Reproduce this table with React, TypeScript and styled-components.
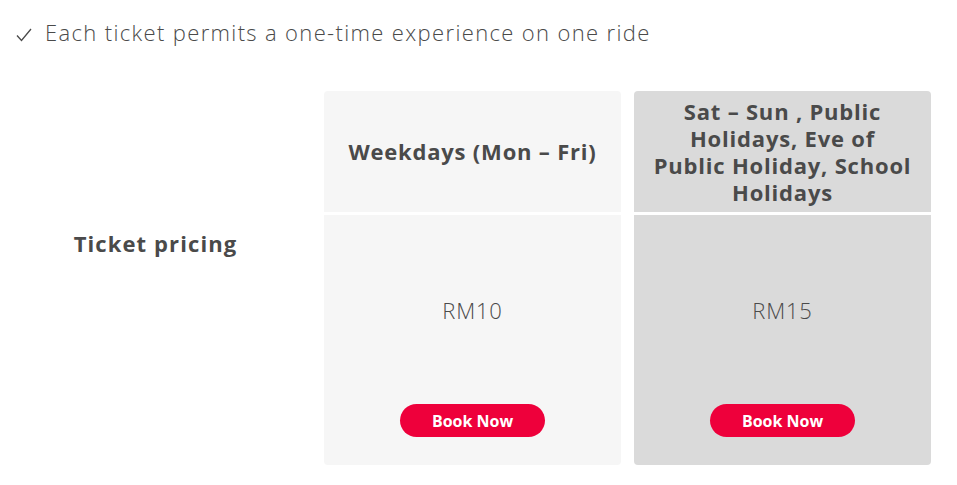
import React from "react";
import styled, { createGlobalStyle } from "styled-components";

const Global = createGlobalStyle`
  html, body { margin: 0; padding: 0; background: #fff; }
  body { font-family: "Open Sans", Lato, sans-serif; color: #4a4a4a; }
`;

const Page = styled.div`
  width: 957px;
  height: 485px;
  box-sizing: border-box;
  padding: 16px 26px 0 0;
`;

const Note = styled.div`
  display: flex;
  align-items: center;
  gap: 12px;
  padding-left: 15px;
  font-size: 22px;
  font-weight: 300;
  letter-spacing: 1.35px;
  height: 32px;
  color: #4a4a4a;
`;

const Check = styled.svg`
  width: 18px;
  height: 18px;
  margin-top: 6px;
`;

const Table = styled.div`
  display: grid;
  grid-template-columns: 311px 297px 297px;
  column-gap: 13px;
  margin-top: 43px;
`;

const Label = styled.div`
  font-size: 22px;
  font-weight: 700;
  letter-spacing: 1.1px;
  text-align: center;
  padding-top: 137px;
  color: #4a4a4a;
`;

const Card = styled.div`
  display: flex;
  flex-direction: column;
  gap: 3px;
`;

const Head = styled.div<{ $bg: string }>`
  background: ${(p) => p.$bg};
  height: 121px;
  border-radius: 4px 4px 0 0;
  display: flex;
  align-items: center;
  justify-content: center;
  text-align: center;
  white-space: pre-line;
  padding: 0 12px;
  box-sizing: border-box;
  font-size: 22px;
  font-weight: 700;
  letter-spacing: 0.8px;
  line-height: 27px;
  color: #4a4a4a;
`;

const Body = styled.div<{ $bg: string }>`
  background: ${(p) => p.$bg};
  height: 250px;
  border-radius: 0 0 4px 4px;
  display: flex;
  flex-direction: column;
  align-items: center;
`;

const Price = styled.div`
  margin-top: 81px;
  font-size: 22px;
  font-weight: 300;
  letter-spacing: 0.8px;
  line-height: 28px;
  color: #4a4a4a;
`;

const Button = styled.button`
  margin-top: 80px;
  width: 145px;
  height: 33px;
  border: none;
  border-radius: 17px;
  background: #ee003b;
  color: #fff;
  font-family: "Open Sans", sans-serif;
  font-size: 16px;
  font-weight: 700;
  cursor: pointer;
`;

const columns = [
  { bg: "#f6f6f6", title: "Weekdays (Mon – Fri)", price: "RM10" },
  {
    bg: "#dadada",
    title: "Sat – Sun , Public Holidays, Eve of\nPublic Holiday, School Holidays",
    price: "RM15",
  },
];

export default function App() {
  return (
    <Page>
      <Global />
      <Note>
        <Check viewBox="0 0 18 18" fill="none">
          <path d="M2 9.5 L6.5 14.5 L16 3" stroke="#4a4a4a" strokeWidth="1.3" />
        </Check>
        Each ticket permits a one-time experience on one ride
      </Note>
      <Table>
        <Label>Ticket pricing</Label>
        {columns.map((c) => (
          <Card key={c.price}>
            <Head $bg={c.bg}>{c.title}</Head>
            <Body $bg={c.bg}>
              <Price>{c.price}</Price>
              <Button>Book Now</Button>
            </Body>
          </Card>
        ))}
      </Table>
    </Page>
  );
}
